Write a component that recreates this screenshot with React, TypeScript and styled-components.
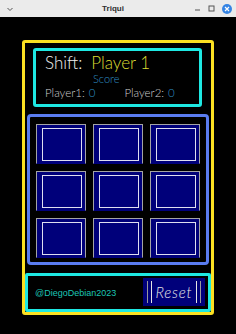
import React from 'react'
import styled, { createGlobalStyle } from 'styled-components'

const GlobalStyle = createGlobalStyle`
  html, body {
    margin: 0;
    padding: 0;
    background: #000;
  }
  body {
    font-family: 'Liberation Sans', Arial, sans-serif;
  }
`

const Window = styled('div')`
  width: 236px;
  height: 334px;
  background: #000;
  display: flex;
  flex-direction: column;
  overflow: hidden;
`

const TitleBar = styled('div')`
  height: 17px;
  background: #ebebeb;
  display: flex;
  align-items: center;
  padding: 0 4px 0 6px;
  box-sizing: border-box;
`

const Title = styled('div')`
  flex: 1;
  text-align: center;
  font: bold 8px 'Liberation Sans', Arial, sans-serif;
  color: #2e2e2e;
  padding-left: 18px;
`

const Controls = styled('div')`
  display: flex;
  align-items: center;
  gap: 7px;
`

const CloseDot = styled('div')`
  width: 10px;
  height: 10px;
  border-radius: 50%;
  background: #3584e4;
  display: flex;
  align-items: center;
  justify-content: center;
`

const Frame = styled('div')`
  width: 192px;
  height: 275px;
  margin: 23px auto 0;
  box-sizing: border-box;
  border: 3px solid #fbe022;
  border-radius: 3px;
  display: flex;
  flex-direction: column;
`

const Header = styled('div')`
  margin: 5px 9px 0 8px;
  height: 59px;
  box-sizing: border-box;
  border: 3px solid #1ee8e2;
  border-radius: 3px;
  padding: 1px 0 0 9px;
  color: #f0f0f0;
  font-family: Lato, 'Liberation Sans', sans-serif;
  font-weight: 300;
`

const TurnLine = styled('div')`
  font-size: 17px;
  line-height: 21px;
  white-space: nowrap;
`

const TurnName = styled('span')`
  color: #dcdc32;
  margin-left: 9px;
`

const ScoreTitle = styled('div')`
  font-size: 11px;
  line-height: 12px;
  color: #2f8fc4;
  margin-left: 48px;
`

const ScoreRow = styled('div')`
  display: flex;
  gap: 29px;
  margin-top: 1px;
  font-size: 11.5px;
  line-height: 13px;
  color: #cfcfcf;
  white-space: nowrap;
`

const ScoreValue = styled('span')`
  color: #2f8fc4;
  margin-left: 4px;
`

const Board = styled('div')`
  margin: 7px 2px 0;
  height: 151px;
  box-sizing: border-box;
  border: 3px solid #5a7cf0;
  border-radius: 4px;
  padding: 7px 0 0 6px;
  display: grid;
  grid-template-columns: repeat(3, 50px);
  grid-template-rows: repeat(3, 40px);
  gap: 7px;
`

const Cell = styled('button')`
  margin: 0;
  padding: 3px 3px 2px 5px;
  background: #00007a;
  border: 1px solid #a4a4a4;
  border-bottom-color: #00007a;
  display: flex;
  cursor: pointer;
`

const CellFace = styled('div')`
  flex: 1;
  border: 1px solid #dedef0;
`

const Footer = styled('div')`
  margin-top: 8px;
  height: 39px;
  box-sizing: border-box;
  border: 3px solid #1ee8e2;
  border-radius: 2px;
  display: flex;
  align-items: center;
  justify-content: space-between;
  padding: 0 3px 0 7px;
`

const Handle = styled('div')`
  font-size: 9px;
  color: #1cc4b4;
`

const ResetButton = styled('button')`
  margin: 0 0 2px;
  height: 28px;
  width: 62px;
  background: #00007a;
  border: none;
  padding: 3px 4px;
  display: flex;
  cursor: pointer;
`

const ResetOuter = styled('div')`
  flex: 1;
  border-left: 1px solid #9a9a9a;
  border-right: 1px solid #9a9a9a;
  padding: 0 3px;
  display: flex;
`

const ResetInner = styled('div')`
  flex: 1;
  border-left: 1px solid #e4e4e4;
  border-right: 1px solid #e4e4e4;
  display: flex;
  align-items: center;
  justify-content: center;
  font: italic 300 15px Lato, 'Liberation Sans', sans-serif;
  letter-spacing: 0.8px;
  color: #e8e8e8;
`

export default function App() {
  const cells = Array.from({ length: 9 }, (_, i) => i)
  return (
    <>
      <GlobalStyle />
      <Window>
        <TitleBar>
          <svg width="8" height="8" viewBox="0 0 8 8">
            <path d="M1.5 3 L4 5.5 L6.5 3" fill="none" stroke="#555" strokeWidth="1" />
          </svg>
          <Title>Triqui</Title>
          <Controls>
            <svg width="7" height="7" viewBox="0 0 7 7">
              <path d="M1 5 H6" stroke="#555" strokeWidth="1" />
            </svg>
            <svg width="7" height="7" viewBox="0 0 7 7">
              <rect x="1" y="1" width="5" height="5" fill="none" stroke="#555" strokeWidth="1" />
            </svg>
            <CloseDot>
              <svg width="6" height="6" viewBox="0 0 6 6">
                <path d="M1 1 L5 5 M5 1 L1 5" stroke="#fff" strokeWidth="1.2" />
              </svg>
            </CloseDot>
          </Controls>
        </TitleBar>
        <Frame>
          <Header>
            <TurnLine>
              Shift:<TurnName>Player 1</TurnName>
            </TurnLine>
            <ScoreTitle>Score</ScoreTitle>
            <ScoreRow>
              <span>
                Player1:<ScoreValue>0</ScoreValue>
              </span>
              <span>
                Player2:<ScoreValue>0</ScoreValue>
              </span>
            </ScoreRow>
          </Header>
          <Board>
            {cells.map((i) => (
              <Cell key={i}>
                <CellFace />
              </Cell>
            ))}
          </Board>
          <Footer>
            <Handle>@DiegoDebian2023</Handle>
            <ResetButton>
              <ResetOuter>
                <ResetInner>Reset</ResetInner>
              </ResetOuter>
            </ResetButton>
          </Footer>
        </Frame>
      </Window>
    </>
  )
}
